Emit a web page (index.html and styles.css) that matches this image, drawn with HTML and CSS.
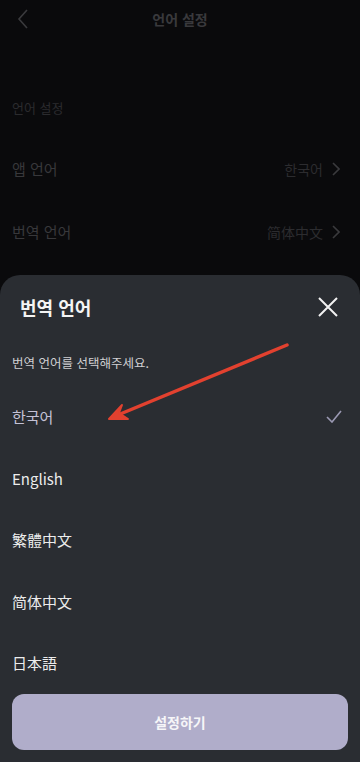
FILE: index.html
```html
<!DOCTYPE html>
<html lang="ko">
<head>
  <meta charset="UTF-8">
  <meta name="viewport" content="width=device-width, initial-scale=1">
  <title>언어 설정</title>
  <link rel="stylesheet" href="styles.css">
</head>
<body>
  <main class="page">
    <header class="topbar">
      <svg class="back" width="12" height="20" viewBox="0 0 12 20"><path d="M10 1 L2 10 L10 19" fill="none" stroke="#3a3a3d" stroke-width="1.6"/></svg>
      <h1 class="topbar-title">언어 설정</h1>
    </header>

    <p class="section-label">언어 설정</p>

    <div class="row">
      <span class="row-name">앱 언어</span>
      <span class="row-value">한국어
        <svg width="8" height="14" viewBox="0 0 8 14"><path d="M1 1 L7 7 L1 13" fill="none" stroke="#3a3a3d" stroke-width="1.6"/></svg>
      </span>
    </div>
    <div class="row">
      <span class="row-name">번역 언어</span>
      <span class="row-value">简体中文
        <svg width="8" height="14" viewBox="0 0 8 14"><path d="M1 1 L7 7 L1 13" fill="none" stroke="#3a3a3d" stroke-width="1.6"/></svg>
      </span>
    </div>
  </main>

  <!-- bottom sheet -->
  <section class="sheet">
    <div class="sheet-head">
      <h2 class="sheet-title">번역 언어</h2>
      <svg class="close" width="20" height="20" viewBox="0 0 20 20"><path d="M1 1 L19 19 M19 1 L1 19" fill="none" stroke="#f2f2f2" stroke-width="2"/></svg>
    </div>
    <p class="sheet-hint">번역 언어를 선택해주세요.</p>

    <ul class="options">
      <li class="option selected">한국어
        <svg width="16" height="13" viewBox="0 0 16 13"><path d="M1 7 L6 12 L15 1" fill="none" stroke="#9b99b3" stroke-width="1.6"/></svg>
      </li>
      <li class="option">English</li>
      <li class="option">繁體中文</li>
      <li class="option">简体中文</li>
      <li class="option">日本語</li>
    </ul>

    <button class="confirm" type="button">설정하기</button>
  </section>

  <!-- red annotation arrow -->
  <svg class="arrow" width="360" height="762" viewBox="0 0 360 762">
    <path d="M287 345 L113 417" stroke="#e2412f" stroke-width="3.5" stroke-linecap="round" fill="none"/>
    <path d="M109 419 L122 405 L119 413 L128 419 Z" fill="#e2412f" stroke="#e2412f" stroke-width="2" stroke-linejoin="round"/>
  </svg>
</body>
</html>
```

FILE: styles.css
```css
body {
  margin: 0;
  padding: 0;
  width: 360px;
  height: 762px;
  overflow: hidden;
  background-color: #0a0a0c;
  font-family: "Noto Sans CJK KR", "Noto Sans", sans-serif;
  position: relative;
}

.page {
  padding: 0 12px;
}

.topbar {
  height: 38px;
  display: flex;
  align-items: center;
  justify-content: center;
  position: relative;
}

.back {
  position: absolute;
  left: 5px;
  top: 9px;
}

.topbar-title {
  margin: 0;
  font-size: 14px;
  font-weight: 700;
  color: #39393c;
}

.section-label {
  margin: 51px 0 10px;
  height: 38px;
  line-height: 38px;
  font-size: 13px;
  color: #2b2b2e;
}

.row {
  height: 63px;
  display: flex;
  align-items: center;
  justify-content: space-between;
}

.row-name {
  font-size: 15px;
  color: #38383b;
}

.row-value {
  display: flex;
  align-items: center;
  gap: 9px;
  font-size: 14px;
  color: #2c2c2f;
  padding-right: 8px;
}

.sheet {
  position: absolute;
  left: 0;
  right: 0;
  top: 275px;
  bottom: 0;
  background-color: #2a2d32;
  border-radius: 20px 20px 0 0;
  padding: 0 12px;
}

.sheet-head {
  height: 64px;
  display: flex;
  align-items: center;
  justify-content: space-between;
  padding: 0 10px 0 8px;
}

.sheet-title {
  margin: 0;
  font-size: 18px;
  font-weight: 700;
  color: #f4f4f4;
}

.sheet-hint {
  margin: 0;
  height: 47px;
  line-height: 47px;
  font-size: 12.5px;
  color: #d0d0d2;
}

.options {
  list-style: none;
  margin: 0;
  padding: 0;
}

.option {
  height: 61.5px;
  display: flex;
  align-items: center;
  justify-content: space-between;
  font-size: 15px;
  color: #ececec;
  padding-right: 6px;
}

.option.selected {
  color: #c4c2d6;
}

.confirm {
  width: 100%;
  height: 56px;
  border: none;
  border-radius: 12px;
  background-color: #b0adca;
  color: #f6f6f8;
  font-family: "Noto Sans CJK KR", sans-serif;
  font-size: 14px;
  font-weight: 700;
  cursor: pointer;
}

.arrow {
  position: absolute;
  left: 0;
  top: 0;
  pointer-events: none;
}
```
